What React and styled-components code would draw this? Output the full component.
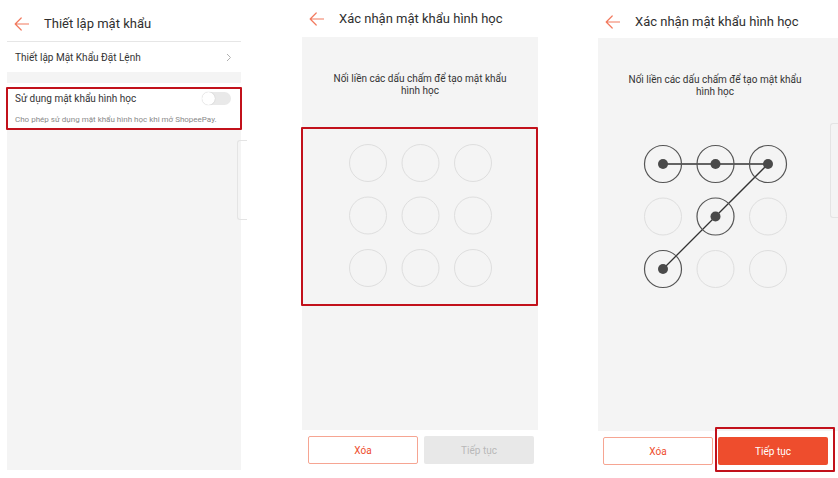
import styled, { createGlobalStyle } from "styled-components"

const GlobalStyle = createGlobalStyle`
    * { box-sizing: border-box; }
    html, body {
        margin: 0;
        padding: 0;
        background: #ffffff;
        font-family: Roboto, "Noto Sans", "Liberation Sans", sans-serif;
        color: #333333;
    }
`

const ORANGE = '#ee4d2d'
const HIGHLIGHT = '#c2111b'

// grid positions for the pattern lock (in svg coords)
const POS = [28, 80.5, 133]

export default function App() {
    return (
        <>
            <GlobalStyle />
            <Page>
                <SettingsScreen />
                <PatternScreen pad={6} connected={[]} />
                <PatternScreen pad={5} connected={[0, 1, 2, 4, 6]} filled />
            </Page>
        </>
    )
}

function BackArrow() {
    return (
        <svg width="15" height="14" viewBox="0 0 15 14">
            <path d="M14.5 7H1.2M7.2 1L1.2 7l6 6" fill="none" stroke="#f27a5e" strokeWidth="1.2" strokeLinecap="round" strokeLinejoin="round" />
        </svg>
    )
}

function SettingsScreen() {
    return (
        <Screen width={234} left={7}>
            <Header top={14} height={42} bordered>
                <BackArrow />
                <HeaderTitle>Thiết lập mật khẩu</HeaderTitle>
            </Header>
            <LinkRow>
                <span>Thiết lập Mật Khẩu Đặt Lệnh</span>
                <svg width="6" height="9" viewBox="0 0 6 9">
                    <path d="M1 1l3.5 3.5L1 8" fill="none" stroke="#b0b0b0" strokeWidth="1" />
                </svg>
            </LinkRow>
            <GrayBody>
                <ToggleSection>
                    <ToggleRow>
                        <span>Sử dụng mật khẩu hình học</span>
                        <Toggle />
                    </ToggleRow>
                    <Hint>Cho phép sử dụng mật khẩu hình học khi mở ShopeePay.</Hint>
                </ToggleSection>
            </GrayBody>
            <SideTab style={{ left: 230, top: 140, height: 80 }} />
            <Highlight style={{ left: -1, top: 87, width: 236, height: 43 }} />
        </Screen>
    )
}

function PatternScreen({ pad, connected, filled }) {
    const pts = connected.map(i => [POS[i % 3], POS[Math.floor(i / 3)]])
    return (
        <Screen width={filled ? 240 : 236} left={filled ? 60 : 61}>
            <Header top={filled ? 12 : 9} height={filled ? 38 : 37}>
                <BackArrow />
                <HeaderTitle>Xác nhận mật khẩu hình học</HeaderTitle>
            </Header>
            <PatternArea pr={filled ? 6 : 0}>
                <Instruction>Nối liền các dấu chấm để tạo mật khẩu<br />hình học</Instruction>
                <svg width="161" height="161" viewBox="0 0 161 161">
                    {pts.slice(1).map((p, i) => (
                        <line key={i} x1={pts[i][0]} y1={pts[i][1]} x2={p[0]} y2={p[1]} stroke="#333" strokeWidth="1.3" />
                    ))}
                    {[0, 1, 2, 3, 4, 5, 6, 7, 8].map(i => {
                        const on = connected.includes(i)
                        const cx = POS[i % 3]
                        const cy = POS[Math.floor(i / 3)]
                        return (
                            <g key={i}>
                                <circle cx={cx} cy={cy} r="18.5" fill="none" stroke={on ? '#555' : '#dedede'} strokeWidth={on ? 1.2 : 1} />
                                {on && <circle cx={cx} cy={cy} r="5" fill="#4a4a4a" />}
                            </g>
                        )
                    })}
                </svg>
            </PatternArea>
            <ButtonBar pad={pad}>
                <OutlineButton>Xóa</OutlineButton>
                <MainButton active={filled}>Tiếp tục</MainButton>
            </ButtonBar>
            {filled
                ? <>
                    <SideTab style={{ left: 232, top: 123, height: 95 }} />
                    <Highlight style={{ left: 117, top: 427, width: 120, height: 45 }} />
                </>
                : <Highlight style={{ left: -1, top: 127, width: 237, height: 179 }} />}
        </Screen>
    )
}

const Page = styled.div`
    display: flex;
    align-items: flex-start;
    width: 838px;
    height: 478px;
    overflow: hidden;
`

const Screen = styled.section`
    position: relative;
    flex: none;
    width: ${props => props.width}px;
    margin-left: ${props => props.left}px;
    display: flex;
    flex-direction: column;
`

const Header = styled.header`
    height: ${props => props.height}px;
    padding: ${props => props.top}px 0 0 7px;
    display: flex;
    align-items: flex-start;
    gap: 15px;
    border-bottom: ${props => props.bordered ? '1px solid #e6e6e6' : 'none'};

    & svg {
        margin-top: 3px;
    }
`

const HeaderTitle = styled.h1`
    margin: 0;
    font-size: 13px;
    line-height: 20px;
    font-weight: 400;
    color: #2f2f2f;
`

const LinkRow = styled.div`
    height: 30px;
    padding: 0 9px 0 8px;
    display: flex;
    align-items: center;
    justify-content: space-between;
    font-size: 10px;
    color: #333;
`

const GrayBody = styled.div`
    height: 398px;
    background: #f4f4f4;
    padding-top: 11px;
`

const ToggleSection = styled.div`
    background: #ffffff;
    height: 47px;
    padding: 7px 10px 0 8px;
`

const ToggleRow = styled.div`
    display: flex;
    align-items: center;
    justify-content: space-between;
    height: 16px;
    font-size: 10px;
    color: #333;
`

const Toggle = styled.span`
    position: relative;
    width: 29px;
    height: 13px;
    border-radius: 7px;
    background: #e9e9e9;

    &::after {
        content: "";
        position: absolute;
        left: 0;
        top: 0;
        width: 13px;
        height: 13px;
        border-radius: 50%;
        background: #ffffff;
        box-shadow: 0 0 1px rgba(0,0,0,0.25);
    }
`

const Hint = styled.p`
    margin: 9px 0 0;
    font-size: 8px;
    color: #8a8a8a;
`

const PatternArea = styled.div`
    height: 393px;
    background: #f4f4f4;
    padding: 36px ${props => props.pr}px 0 0;
    display: flex;
    flex-direction: column;
    align-items: center;

    & svg {
        margin-top: 38px;
    }
`

const Instruction = styled.p`
    margin: 0;
    font-size: 10px;
    line-height: 12px;
    text-align: center;
    color: #333;
`

const ButtonBar = styled.div`
    display: flex;
    gap: ${props => props.pad}px;
    padding: 6px 0 0 ${props => props.pad}px;
`

const OutlineButton = styled.button`
    width: 110px;
    height: 28px;
    border: 1px solid #f6a592;
    border-radius: 2px;
    background: #ffffff;
    color: ${ORANGE};
    font-family: inherit;
    font-size: 10px;
    padding: 0;
`

const MainButton = styled.button`
    width: 110px;
    height: 28px;
    border: none;
    border-radius: 2px;
    background: ${props => props.active ? ORANGE : '#e8e8e8'};
    color: ${props => props.active ? '#ffffff' : '#b8b8b8'};
    font-family: inherit;
    font-size: 10px;
    padding: 0;
`

const Highlight = styled.div`
    position: absolute;
    border: 2px solid ${HIGHLIGHT};
    border-radius: 1px;
    pointer-events: none;
`

const SideTab = styled.div`
    position: absolute;
    width: 10px;
    border: 1px solid #e4e4e4;
    border-right: none;
    border-radius: 3px 0 0 3px;
`
